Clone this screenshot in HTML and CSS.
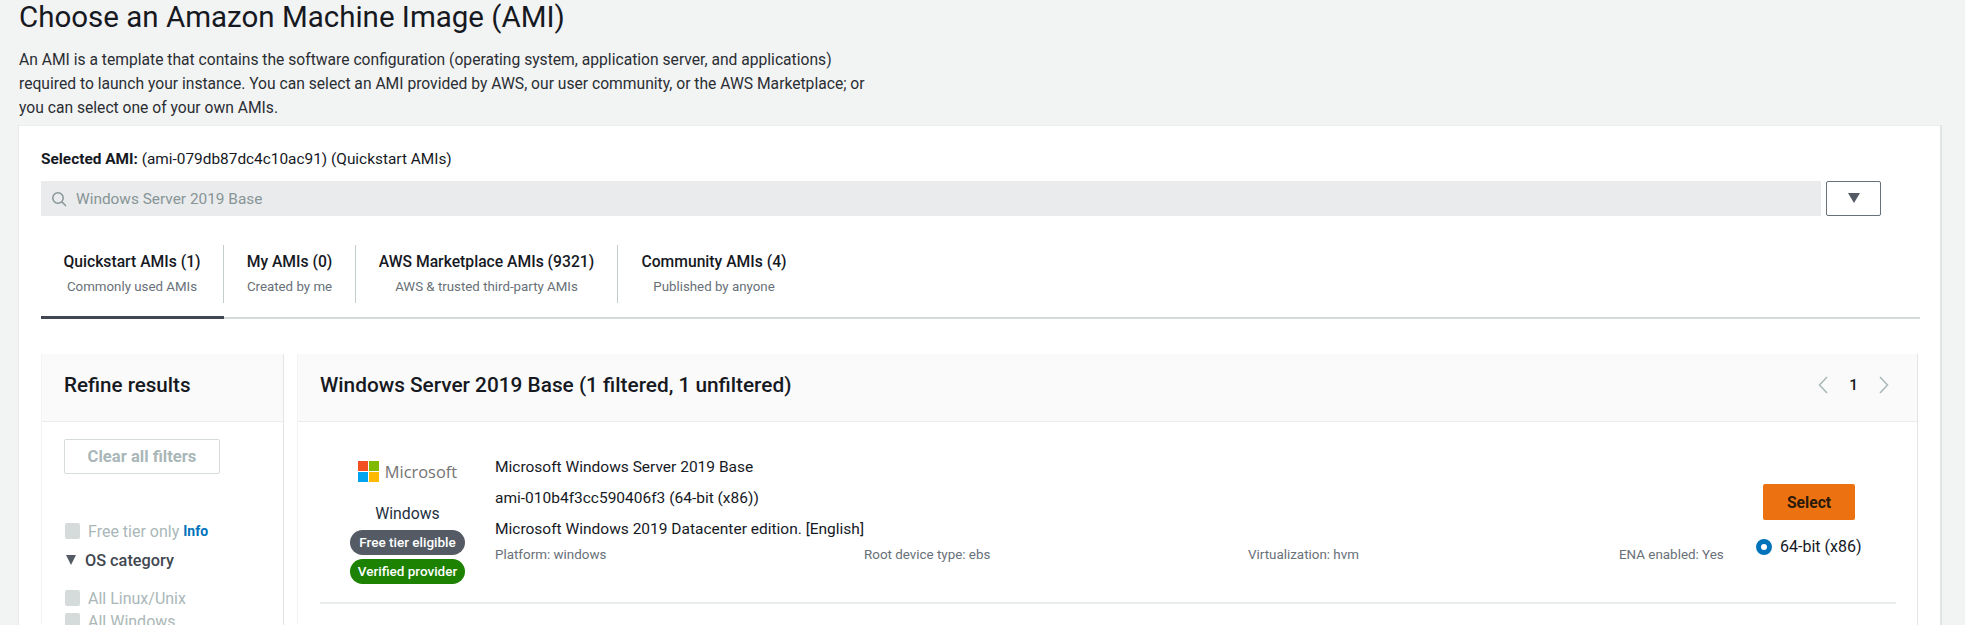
FILE: index.html
```html
<!DOCTYPE html>
<html lang="en">
<head>
    <meta charset="UTF-8">
    <title>Choose an Amazon Machine Image (AMI)</title>
    <link rel="stylesheet" href="styles.css">
</head>
<body>
    <h1>Choose an Amazon Machine Image (AMI)</h1>
    <p class="intro">An AMI is a template that contains the software configuration (operating system, application server, and applications)<br>required to launch your instance. You can select an AMI provided by AWS, our user community, or the AWS Marketplace; or<br>you can select one of your own AMIs.</p>

    <div class="panel">
        <div class="selected"><strong>Selected AMI:</strong> (ami-079db87dc4c10ac91) (Quickstart AMIs)</div>

        <div class="search-row">
            <div class="search">
                <svg class="search-icon" viewBox="0 0 16 16" width="16" height="16">
                    <circle cx="7" cy="7" r="5.2"></circle>
                    <line x1="10.8" y1="10.8" x2="15" y2="15"></line>
                </svg>
                <span>Windows Server 2019 Base</span>
            </div>
            <button class="drop-btn"><span class="tri"></span></button>
        </div>

        <div class="tabs">
            <div class="tab active tab-quick">
                <b>Quickstart AMIs (1)</b>
                <small>Commonly used AMIs</small>
            </div>
            <div class="tab tab-my">
                <b>My AMIs (0)</b>
                <small>Created by me</small>
            </div>
            <div class="tab tab-market">
                <b>AWS Marketplace AMIs (9321)</b>
                <small>AWS &amp; trusted third-party AMIs</small>
            </div>
            <div class="tab tab-community">
                <b>Community AMIs (4)</b>
                <small>Published by anyone</small>
            </div>
        </div>

        <div class="browser">
            <!-- Left side - filters -->
            <div class="refine">
                <div class="refine-head">Refine results</div>
                <div class="refine-body">
                    <button class="clear-btn">Clear all filters</button>
                    <label class="check first"><i></i>Free tier only <a>Info</a></label>
                    <div class="os-head"><span class="tri"></span>OS category</div>
                    <label class="check"><i></i>All Linux/Unix</label>
                    <label class="check"><i></i>All Windows</label>
                </div>
            </div>

            <!-- Right side - results -->
            <div class="results">
                <div class="results-head">
                    <h2>Windows Server 2019 Base (1 filtered, 1 unfiltered)</h2>
                    <div class="pager">
                        <svg viewBox="0 0 10 18" width="10" height="18"><path d="M9 1 L1.5 9 L9 17"></path></svg>
                        <span>1</span>
                        <svg viewBox="0 0 10 18" width="10" height="18"><path d="M1 1 L8.5 9 L1 17"></path></svg>
                    </div>
                </div>
                <div class="card">
                    <div class="vendor">
                        <div class="ms-logo">
                            <svg viewBox="0 0 21 21" width="21" height="21">
                                <rect width="10" height="10" fill="#f25022"></rect>
                                <rect x="11" width="10" height="10" fill="#7fba00"></rect>
                                <rect y="11" width="10" height="10" fill="#00a4ef"></rect>
                                <rect x="11" y="11" width="10" height="10" fill="#ffb900"></rect>
                            </svg>
                            <span>Microsoft</span>
                        </div>
                        <div class="os-name">Windows</div>
                        <div class="badge grey">Free tier eligible</div>
                        <div class="badge green">Verified provider</div>
                    </div>
                    <div class="details">
                        <div class="line">Microsoft Windows Server 2019 Base</div>
                        <div class="line">ami-010b4f3cc590406f3 (64-bit (x86))</div>
                        <div class="line">Microsoft Windows 2019 Datacenter edition. [English]</div>
                        <div class="meta">
                            <span>Platform: windows</span>
                            <span>Root device type: ebs</span>
                            <span>Virtualization: hvm</span>
                            <span>ENA enabled: Yes</span>
                        </div>
                    </div>
                    <div class="actions">
                        <button class="select-btn">Select</button>
                        <label class="radio"><i></i>64-bit (x86)</label>
                    </div>
                </div>
            </div>
        </div>
    </div>
</body>
</html>
```

FILE: styles.css
```css
body {
    margin: 0;
    padding: 0 23px 0 19px;
    height: 625px;
    overflow: hidden;
    box-sizing: border-box;
    background-color: #f2f3f3;
    color: #16191f;
    font-family: Roboto, "Noto Sans", sans-serif;
    font-size: 15.4px;
}

h1 {
    margin: -1px 0 0;
    font-size: 29.5px;
    font-weight: 400;
    line-height: 37px;
}

.intro {
    margin: 12px 0 0;
    height: 77px;
    line-height: 24px;
    font-size: 15.65px;
    color: #2a2e33;
}

.panel {
    margin-left: -1px;
    padding: 24px 20px 0 22px;
    height: 500px;
    box-sizing: border-box;
    background-color: #fff;
    border-right: 2px solid #e3e4e4;
    border-left: 1px solid #e8e9e9;
    border-top: 1px solid #eaeded;
}

.selected {
    line-height: 18px;
}

.search-row {
    display: flex;
    gap: 5px;
    margin-top: 13px;
    margin-right: 39px;
}

.search {
    flex: 1;
    height: 35px;
    display: flex;
    align-items: center;
    gap: 9px;
    padding-left: 10px;
    background-color: #eaebed;
    color: #879596;
}

.search-icon {
    fill: none;
    stroke: #879596;
    stroke-width: 1.5;
}

.tri {
    display: inline-block;
    width: 0;
    height: 0;
    border-left: 6px solid transparent;
    border-right: 6px solid transparent;
    border-top: 10px solid #545b64;
}

.drop-btn {
    width: 55px;
    height: 35px;
    padding: 0;
    background-color: #fff;
    border: 1px solid #687078;
    border-radius: 2px;
}

.tabs {
    display: flex;
    margin-top: 29px;
    height: 72px;
    border-bottom: 2px solid #d5dbdb;
}

.tab {
    height: 58px;
    padding-top: 8px;
    box-sizing: border-box;
    text-align: center;
    border-right: 1px solid #c5cccc;
}

.tab:last-child {
    border-right: none;
}

.tab b {
    display: block;
    font-size: 15.7px;
    font-weight: 500;
    line-height: 18px;
}

.tab small {
    display: block;
    margin-top: 7px;
    font-size: 13.3px;
    line-height: 18px;
    color: #687078;
}

.tab-quick { width: 183px; }
.tab-my { width: 132px; }
.tab-market { width: 262px; }
.tab-community { width: 192px; }

.tab.active {
    position: relative;
}

.tab.active::after {
    content: "";
    position: absolute;
    left: 0;
    right: -1px;
    bottom: -16px;
    height: 3px;
    background-color: #414750;
}

.browser {
    display: flex;
    gap: 13px;
    margin-top: 35px;
    margin-right: 2px;
}

.refine {
    width: 243px;
    flex-shrink: 0;
    box-sizing: border-box;
    height: 275px;
    border-right: 1px solid #e3e4e4;
    border-left: 1px solid #f2f3f3;
}

.refine-head {
    height: 61px;
    padding: 0 0 6px 22px;
    display: flex;
    align-items: center;
    background-color: #fafafa;
    border-bottom: 1px solid #eaeded;
    font-size: 20.6px;
    font-weight: 500;
}

.refine-body {
    padding: 17px 0 0 23px;
}

.clear-btn {
    display: block;
    width: 156px;
    height: 35px;
    margin-left: -1px;
    padding: 0;
    background-color: #fff;
    border: 1px solid #d5dbdb;
    border-radius: 2px;
    color: #aab7b8;
    font-family: inherit;
    font-size: 16.6px;
    font-weight: 700;
}

.check {
    display: flex;
    align-items: center;
    gap: 8px;
    height: 16px;
    margin-bottom: 7px;
    color: #aab7b8;
    font-size: 16px;
    white-space: pre;
}

.check.first {
    margin-top: 49px;
    margin-bottom: 0;
}

.check i {
    width: 15px;
    height: 16px;
    background-color: #d5dbdb;
    border-radius: 2px;
}

.check a {
    margin-left: -8px;
    color: #0073bb;
    font-size: 14px;
    font-weight: 700;
}

.os-head {
    display: flex;
    align-items: center;
    gap: 9px;
    margin: 12px 0 21px 1px;
    height: 18px;
    font-size: 16.3px;
    font-weight: 500;
    color: #414750;
}

.os-head .tri {
    border-left-width: 5px;
    border-right-width: 5px;
}

.results {
    flex: 1;
    height: 275px;
    border-right: 1px solid #e3e4e4;
    border-left: 1px solid #f2f3f3;
}

.results-head {
    height: 61px;
    padding: 0 28px 6px 22px;
    display: flex;
    align-items: center;
    justify-content: space-between;
    background-color: #fafafa;
    border-bottom: 1px solid #eaeded;
}

h2 {
    margin: 0;
    font-size: 20.8px;
    font-weight: 500;
}

.pager {
    display: flex;
    align-items: center;
    gap: 21px;
    font-size: 15.4px;
    font-weight: 500;
}

.pager path {
    fill: none;
    stroke: #aab7b8;
    stroke-width: 1.5;
}

.card {
    display: flex;
    margin: 0 21px 0 22px;
    height: 182px;
    border-bottom: 2px solid #eaeded;
    box-sizing: border-box;
}

.vendor {
    width: 175px;
    flex-shrink: 0;
    display: flex;
    flex-direction: column;
    align-items: center;
    padding-top: 39px;
    box-sizing: border-box;
}

.ms-logo {
    display: flex;
    align-items: center;
    gap: 6px;
    height: 21px;
    color: #737373;
    font-family: "Open Sans", sans-serif;
    font-size: 16.4px;
}

.os-name {
    margin-top: 23px;
    line-height: 18px;
    font-size: 15.8px;
    color: #232f3e;
}

.badge {
    margin-top: 7px;
    height: 25px;
    line-height: 25px;
    border-radius: 13px;
    color: #fff;
    font-size: 13.5px;
    font-weight: 500;
}

.badge.grey {
    padding: 0 9px;
    background-color: #545b64;
}

.badge.green {
    margin-top: 4px;
    padding: 0 8px;
    background-color: #1d8102;
}

.details {
    flex: 1;
    padding-top: 35px;
}

.line {
    height: 31px;
    line-height: 20px;
    font-size: 15.5px;
}

.meta {
    display: grid;
    grid-template-columns: 369px 384px 371px auto;
    margin-top: -4px;
    line-height: 18px;
    font-size: 13.4px;
    color: #687078;
}

.actions {
    width: 154px;
    flex-shrink: 0;
    display: flex;
    flex-direction: column;
    padding: 62px 0 0 14px;
    box-sizing: border-box;
}

.select-btn {
    width: 92px;
    height: 36px;
    margin-left: 7px;
    padding: 0;
    border: none;
    border-radius: 2px;
    background-color: #ec7211;
    color: #2b1a0a;
    font-family: inherit;
    font-size: 15.7px;
    font-weight: 700;
}

.radio {
    display: flex;
    align-items: center;
    gap: 8px;
    margin-top: 17px;
    font-size: 16px;
    line-height: 20px;
}

.radio i {
    width: 6px;
    height: 6px;
    background-color: #fff;
    border: 5px solid #0073bb;
    border-radius: 50%;
}
```
